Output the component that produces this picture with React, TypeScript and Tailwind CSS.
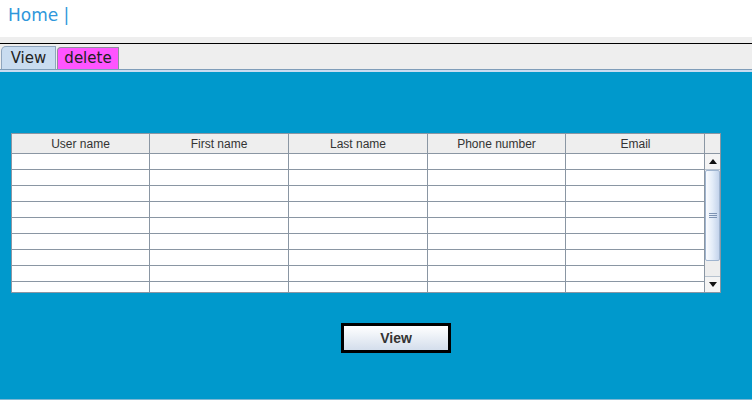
import React from "react";

const columns = ["User name", "First name", "Last name", "Phone number", "Email"];
const rows = Array.from({ length: 9 });

const ScrollBar = () => (
  <div className="flex w-[16px] flex-col border-l border-[#8a96a3] bg-[#eeeeee]">
    <div className="h-[20px] border-b border-[#8a96a3] bg-[#eeeeee]" />
    <div className="flex h-[16px] items-center justify-center border-b border-[#b8c3cf] bg-[#f4f4f4]">
      <svg width="8" height="5" viewBox="0 0 8 5">
        <path d="M0 5 L4 0 L8 5 Z" fill="#111" />
      </svg>
    </div>
    <div className="flex h-[91px] items-center justify-center rounded-[2px] border border-[#9fb4cf] bg-gradient-to-r from-[#fafcff] via-[#e3ecf8] to-[#c4d4ec]">
      <div className="flex flex-col gap-[1px]">
        <div className="h-px w-[8px] bg-[#7d93b3]" />
        <div className="h-px w-[8px] bg-[#7d93b3]" />
        <div className="h-px w-[8px] bg-[#7d93b3]" />
      </div>
    </div>
    <div className="flex-1 bg-[#eeeeee]" />
    <div className="flex h-[16px] items-center justify-center border-t border-[#b8c3cf] bg-[#f4f4f4]">
      <svg width="8" height="5" viewBox="0 0 8 5">
        <path d="M0 0 L8 0 L4 5 Z" fill="#111" />
      </svg>
    </div>
  </div>
);

export default function App() {
  return (
    <div className="flex h-[400px] w-[752px] flex-col bg-white font-['DejaVu_Sans',sans-serif]">
      <div className="h-[37px] px-[8px] pt-[3px] text-[17px] text-[#2f97db]">Home |</div>
      <div className="h-[6px] bg-[#eeeeee]" />
      <div className="h-px bg-black" />
      <div className="flex h-[25px] items-end bg-[#eeeeee] pl-[1px]">
        <div className="flex h-[23px] w-[55px] items-center justify-center rounded-tl-[5px] border border-b-0 border-[#8fa5bd] bg-[#c9dcf0] text-[15px] text-[#222]">
          View
        </div>
        <div className="ml-[1px] flex h-[22px] w-[62px] items-center justify-center rounded-tl-[4px] border border-b-0 border-[#8e8e9e] bg-[#ff55ff] text-[15px] text-[#222]">
          delete
        </div>
      </div>
      <div className="h-px bg-[#7f9db9]" />
      <div className="h-[2px] bg-[#c9dcf0]" />
      <div className="flex-1 border-b border-[#7fb8d4] bg-[#0099cc] pt-[61px]">
        <div className="ml-[11px] flex h-[160px] w-[710px] border border-[#8a96a3] bg-white font-['Liberation_Sans',sans-serif]">
          <div className="flex flex-1 flex-col overflow-hidden">
            <div className="grid h-[20px] shrink-0 grid-cols-[138px_139px_139px_138px_139px] border-b border-[#8a96a3] bg-[#eeeeee]">
              {columns.map((c, i) => (
                <div
                  key={c}
                  className={`flex items-center justify-center text-[12px] text-[#333] ${i < 4 ? "border-r border-[#8a96a3]" : ""}`}
                >
                  {c}
                </div>
              ))}
            </div>
            {rows.map((_, r) => (
              <div key={r} className="grid h-[16px] shrink-0 grid-cols-[138px_139px_139px_138px_139px] border-b border-[#8a96a3]">
                {columns.map((c, i) => (
                  <div key={c} className={i < 4 ? "border-r border-[#8a96a3]" : ""} />
                ))}
              </div>
            ))}
          </div>
          <ScrollBar />
        </div>
        <button className="ml-[341px] mt-[30px] flex h-[30px] w-[110px] items-center justify-center border-[3px] border-black bg-gradient-to-b from-white to-[#d4deec] font-['Liberation_Sans',sans-serif] text-[14px] font-bold text-[#333]">
          View
        </button>
      </div>
    </div>
  );
}
